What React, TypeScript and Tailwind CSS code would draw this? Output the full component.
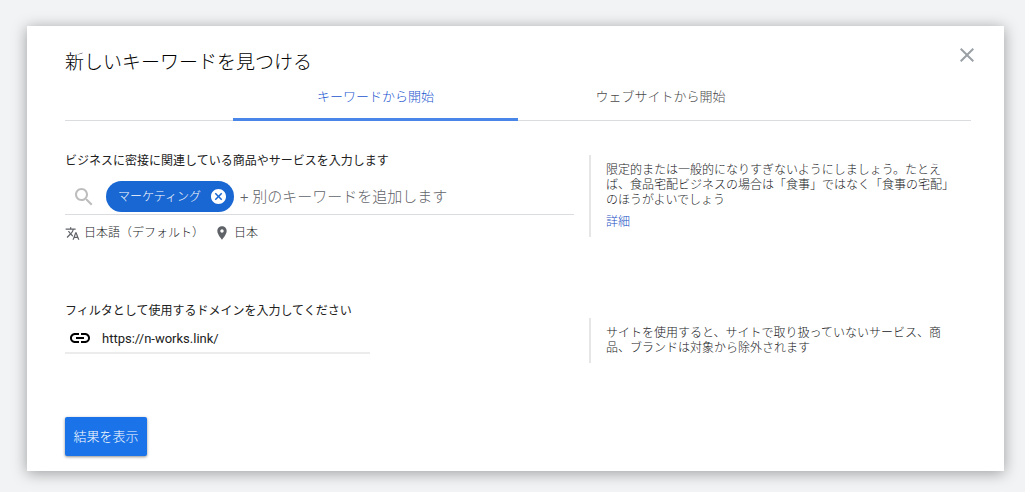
import { useState } from "react";
import type { ReactNode } from "react";

function Icon({ d, className }: { d: string; className: string }) {
  return (
    <svg viewBox="0 0 24 24" fill="currentColor" aria-hidden="true" className={`shrink-0 ${className}`}>
      <path d={d} />
    </svg>
  );
}

const icons = {
  close:
    "M19 6.41L17.59 5 12 10.59 6.41 5 5 6.41 10.59 12 5 17.59 6.41 19 12 13.41 17.59 19 19 17.59 13.41 12z",
  cancel:
    "M12 0C5.37 0 0 5.37 0 12s5.37 12 12 12 12-5.37 12-12S18.63 0 12 0zm6 16.31L16.31 18 12 13.69 7.69 18 6 16.31 10.31 12 6 7.69 7.69 6 12 10.31 16.31 6 18 7.69 13.69 12z",
  search:
    "M15.5 14h-.79l-.28-.27C15.41 12.59 16 11.11 16 9.5 16 5.91 13.09 3 9.5 3S3 5.91 3 9.5 5.91 16 9.5 16c1.61 0 3.09-.59 4.23-1.57l.27.28v.79l5 4.99L20.49 19l-4.99-5zm-6 0C7.01 14 5 11.99 5 9.5S7.01 5 9.5 5 14 7.01 14 9.5 11.99 14 9.5 14z",
  translate:
    "M12.87 15.07l-2.54-2.51.03-.03c1.74-1.94 2.98-4.17 3.71-6.53H17V4h-7V2H8v2H1v1.99h11.17C11.5 7.92 10.44 9.75 9 11.35 8.07 10.32 7.3 9.19 6.69 8h-2c.73 1.63 1.73 3.17 2.98 4.56l-5.09 5.02L4 19l5-5 3.11 3.11.76-2.04zM18.5 10h-2L12 22h2l1.12-3h4.75L21 22h2l-4.5-12zm-2.62 7l1.62-4.33L19.12 17h-3.24z",
  place:
    "M12 2C8.13 2 5 5.13 5 9c0 5.25 7 13 7 13s7-7.75 7-13c0-3.87-3.13-7-7-7zm0 9.5c-1.38 0-2.5-1.12-2.5-2.5s1.12-2.5 2.5-2.5 2.5 1.12 2.5 2.5-1.12 2.5-2.5 2.5z",
  link:
    "M3.9 12c0-1.71 1.39-3.1 3.1-3.1h4V7H7c-2.76 0-5 2.24-5 5s2.24 5 5 5h4v-1.9H7c-1.71 0-3.1-1.39-3.1-3.1zM8 13h8v-2H8v2zm9-6h-4v1.9h4c1.71 0 3.1 1.39 3.1 3.1s-1.39 3.1-3.1 3.1h-4V17h4c2.76 0 5-2.24 5-5s-2.24-5-5-5z",
};

function Tab({ selected, onSelect, children }: { selected: boolean; onSelect: () => void; children: ReactNode }) {
  return (
    <button
      type="button"
      role="tab"
      aria-selected={selected}
      onClick={onSelect}
      className={`-mb-px w-[285px] border-b-[3px] pt-[13px] pb-[11px] text-[13px] leading-5 font-light ${
        selected ? "border-[#4a86e8] text-[#1a56d0]" : "border-transparent text-[#4a4a4a]"
      }`}
    >
      {children}
    </button>
  );
}

function Hint({ children }: { children: ReactNode }) {
  return (
    <aside className="self-start border-l-2 border-[#e6e6e6] pt-2 pb-[7px] pl-[15px] text-xs leading-[15px] font-light text-[#202124]">
      <div className="max-w-[345px]">{children}</div>
    </aside>
  );
}

export default function App() {
  const [tab, setTab] = useState(0);
  const [keywords, setKeywords] = useState(["マーケティング"]);
  const [draft, setDraft] = useState("");
  const [domain, setDomain] = useState("https://n-works.link/");

  return (
    <div className="min-h-screen bg-[#f1f3f4] pt-[26px] pr-[21px] pb-[21px] pl-[27px] font-[Roboto,'Noto_Sans_CJK_JP',sans-serif]">
      <main
        lang="ja"
        className="bg-white pt-[17px] pr-[33px] pb-[15px] pl-[38px] shadow-[0_2px_14px_rgba(0,0,0,0.36)]"
      >
        <header className="flex h-[31px] items-start justify-between">
          <h1 className="mt-2 text-[19px] leading-6 font-light text-black">新しいキーワードを見つける</h1>
          <button type="button" aria-label="閉じる" className="-mr-2 text-[#9aa0a6]">
            <Icon d={icons.close} className="size-6" />
          </button>
        </header>

        <div role="tablist" className="flex justify-center border-b border-[#dadce0]">
          <Tab selected={tab === 0} onSelect={() => setTab(0)}>
            キーワードから開始
          </Tab>
          <Tab selected={tab === 1} onSelect={() => setTab(1)}>
            ウェブサイトから開始
          </Tab>
        </div>

        <form onSubmit={(e) => e.preventDefault()}>
          <div className="mt-8 grid grid-cols-[minmax(0,509fr)_minmax(0,382fr)] gap-x-[15px]">
            <section>
              <label htmlFor="keywords" className="block text-xs leading-4 text-[#212121]">
                ビジネスに密接に関連している商品やサービスを入力します
              </label>
              <div className="mt-3 flex items-center border-b border-[#dadce0] pb-0.5 pl-[7px]">
                <Icon d={icons.search} className="mr-2.5 size-6 text-[#bdbdbd]" />
                {keywords.map((keyword) => (
                  <span
                    key={keyword}
                    className="mr-1.5 flex h-[31px] shrink-0 items-center rounded-full bg-[#1967d2] pr-2 pl-3 text-xs font-light text-white"
                  >
                    {keyword}
                    <button
                      type="button"
                      aria-label={`${keyword}を削除`}
                      onClick={() => setKeywords(keywords.filter((k) => k !== keyword))}
                      className="ml-2.5"
                    >
                      <Icon d={icons.cancel} className="size-[15px]" />
                    </button>
                  </span>
                ))}
                <input
                  id="keywords"
                  type="text"
                  value={draft}
                  onChange={(e) => setDraft(e.target.value)}
                  placeholder="+ 別のキーワードを追加します"
                  className="h-[31px] min-w-0 flex-1 bg-transparent text-[15px] font-light text-[#212121] outline-none placeholder:text-[#5f6368]"
                />
              </div>
              <div className="mt-2.5 flex gap-2.5 text-xs leading-4 font-light text-[#202124]">
                <button type="button" className="flex items-center gap-1">
                  <Icon d={icons.translate} className="size-[15px] text-[#5f6368]" />
                  日本語（デフォルト）
                </button>
                <button type="button" className="flex items-center gap-1">
                  <Icon d={icons.place} className="size-4 text-[#5f6368]" />
                  日本
                </button>
              </div>
            </section>
            <div className="mt-[2px]">
              <Hint>
                <p>
                  限定的または一般的になりすぎないようにしましょう。たとえば、食品宅配ビジネスの場合は「食事」ではなく「食事の宅配」のほうがよいでしょう
                </p>
                <a href="#details" className="mt-[7px] inline-block text-[#1a4fc4]">
                  詳細
                </a>
              </Hint>
            </div>
          </div>

          <div className="mt-[62px] grid grid-cols-[minmax(0,509fr)_minmax(0,382fr)] gap-x-[15px]">
            <section>
              <label htmlFor="domain" className="block text-xs leading-4 text-[#212121]">
                フィルタとして使用するドメインを入力してください
              </label>
              <div className="flex w-3/5 items-center gap-2.5 border-b-2 border-[#ececec] pt-[7px] pb-0.5 pl-[3px]">
                <Icon d={icons.link} className="size-6 text-black" />
                <input
                  id="domain"
                  type="text"
                  value={domain}
                  onChange={(e) => setDomain(e.target.value)}
                  className="h-6 min-w-0 flex-1 bg-transparent text-[13px] text-[#212121] outline-none"
                />
              </div>
            </section>
            <div className="mt-[15px]">
              <Hint>
                <p>サイトを使用すると、サイトで取り扱っていないサービス、商品、ブランドは対象から除外されます</p>
              </Hint>
            </div>
          </div>

          <button
            type="submit"
            className="mt-[54px] flex h-[39px] w-[82px] items-center justify-center rounded-xs bg-[#1a73e8] text-[13px] font-light text-white shadow-[0_1px_3px_rgba(0,0,0,0.45)]"
          >
            結果を表示
          </button>
        </form>
      </main>
    </div>
  );
}
